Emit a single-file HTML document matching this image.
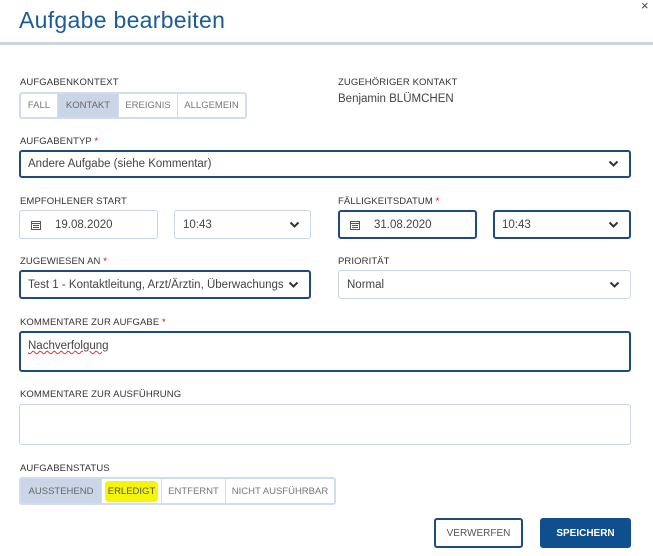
<!DOCTYPE html>
<html><head><meta charset="utf-8"><style>
*{box-sizing:border-box;margin:0;padding:0}
body{width:653px;height:556px;background:#fff;font-family:"Liberation Sans",sans-serif;color:#333;position:relative;overflow:hidden}
.a{position:absolute}
h1{position:absolute;left:19px;top:7px;font-size:23px;font-weight:normal;color:#1b5c98;letter-spacing:0.3px}
.sep{left:0;top:42px;width:653px;height:3px;background:#c9d4e6}
.lbl{position:absolute;font-size:9.5px;color:#333;letter-spacing:0.1px}
.req{color:#d0021b}
.box{position:absolute;border:1px solid #c9d4e6;border-radius:3px;font-size:11.5px;color:#444;display:flex;align-items:center;padding-left:8px;background:#fff}
.dk{border:2px solid #1d4a80;padding-left:7px}
.chev{position:absolute;right:10px;top:50%;margin-top:-4px}
.seg{position:absolute;display:flex;border:2px solid #d3dcec;border-radius:3px;height:27px;font-size:9.5px;color:#777}
.seg div{display:flex;align-items:center;justify-content:center;border-right:1px solid #d3dcec}
.seg div:last-child{border-right:none}
.on{background:#cbd5e8;color:#666}
.cal{display:inline-block;margin-right:14px}
</style></head><body>
<h1>Aufgabe bearbeiten</h1>
<div class="a" style="left:641px;top:-2px;font-size:13px;color:#444">×</div>
<div class="a sep"></div>

<div class="lbl" style="left:20px;top:77px">AUFGABENKONTEXT</div>
<div class="seg" style="left:19px;top:92px;width:228px">
<div style="width:37px">FALL</div><div class="on" style="width:61px">KONTAKT</div><div style="width:59px">EREIGNIS</div><div style="flex:1">ALLGEMEIN</div></div>
<div class="lbl" style="left:338px;top:77px">ZUGEHÖRIGER KONTAKT</div>
<div class="a" style="left:338px;top:93px;font-size:11.5px;color:#444">Benjamin BLÜMCHEN</div>

<div class="lbl" style="left:20px;top:136px">AUFGABENTYP <span class="req">*</span></div>
<div class="box dk" style="left:19px;top:150px;width:612px;height:28px">Andere Aufgabe (siehe Kommentar)<svg class="chev" width="11" height="8" viewBox="0 0 11 8"><path d="M1.5 1.5l4 4 4-4" stroke="#333" stroke-width="2" fill="none"/></svg></div>

<div class="lbl" style="left:20px;top:196px">EMPFOHLENER START</div>
<div class="box" style="left:19px;top:210px;width:139px;height:29px;padding-left:11px"><svg class="cal" width="10" height="10" viewBox="0 0 10 10"><rect x="0.5" y="1.5" width="9" height="8" fill="none" stroke="#555"/><path d="M0.5 3.5h9M2 5.5h6M2 7.5h6" stroke="#555"/></svg>19.08.2020</div>
<div class="box" style="left:174px;top:210px;width:137px;height:29px">10:43<svg class="chev" width="11" height="8" viewBox="0 0 11 8"><path d="M1.5 1.5l4 4 4-4" stroke="#333" stroke-width="2" fill="none"/></svg></div>

<div class="lbl" style="left:338px;top:196px">FÄLLIGKEITSDATUM <span class="req">*</span></div>
<div class="box dk" style="left:338px;top:210px;width:139px;height:29px;padding-left:10px"><svg class="cal" width="10" height="10" viewBox="0 0 10 10"><rect x="0.5" y="1.5" width="9" height="8" fill="none" stroke="#555"/><path d="M0.5 3.5h9M2 5.5h6M2 7.5h6" stroke="#555"/></svg>31.08.2020</div>
<div class="box dk" style="left:493px;top:210px;width:138px;height:29px">10:43<svg class="chev" width="11" height="8" viewBox="0 0 11 8"><path d="M1.5 1.5l4 4 4-4" stroke="#333" stroke-width="2" fill="none"/></svg></div>

<div class="lbl" style="left:20px;top:256px">ZUGEWIESEN AN <span class="req">*</span></div>
<div class="box dk" style="left:19px;top:270px;width:292px;height:29px">Test 1 - Kontaktleitung, Arzt/Ärztin, Überwachungs<svg class="chev" width="11" height="8" viewBox="0 0 11 8"><path d="M1.5 1.5l4 4 4-4" stroke="#333" stroke-width="2" fill="none"/></svg></div>
<div class="lbl" style="left:338px;top:256px">PRIORITÄT</div>
<div class="box" style="left:338px;top:270px;width:293px;height:29px">Normal<svg class="chev" width="11" height="8" viewBox="0 0 11 8"><path d="M1.5 1.5l4 4 4-4" stroke="#333" stroke-width="2" fill="none"/></svg></div>

<div class="lbl" style="left:20px;top:317px">KOMMENTARE ZUR AUFGABE <span class="req">*</span></div>
<div class="box dk" style="left:19px;top:331px;width:612px;height:41px;align-items:flex-start;padding-top:7px"><span style="text-decoration:underline wavy #d33;text-decoration-thickness:1px">Nachverfolgung</span></div>

<div class="lbl" style="left:20px;top:389px">KOMMENTARE ZUR AUSFÜHRUNG</div>
<div class="box" style="left:19px;top:404px;width:612px;height:41px"></div>

<div class="lbl" style="left:20px;top:463px">AUFGABENSTATUS</div>
<div class="seg" style="left:19px;top:477px;width:317px;height:28px">
<div class="on" style="width:81px">AUSSTEHEND</div><div style="width:60px"><span style="background:#f5f50a;padding:5px 3px;border-radius:4px;color:#555">ERLEDIGT</span></div><div style="width:64px">ENTFERNT</div><div style="flex:1">NICHT AUSFÜHRBAR</div></div>

<div class="a" style="left:434px;top:518px;width:89px;height:30px;border:2px solid #1d4a80;border-radius:3px;font-size:10px;color:#555;display:flex;align-items:center;justify-content:center">VERWERFEN</div>
<div class="a" style="left:540px;top:518px;width:91px;height:30px;background:#0f4f8e;border-radius:3px;font-size:10px;font-weight:bold;color:#fff;display:flex;align-items:center;justify-content:center">SPEICHERN</div>
</body></html>
